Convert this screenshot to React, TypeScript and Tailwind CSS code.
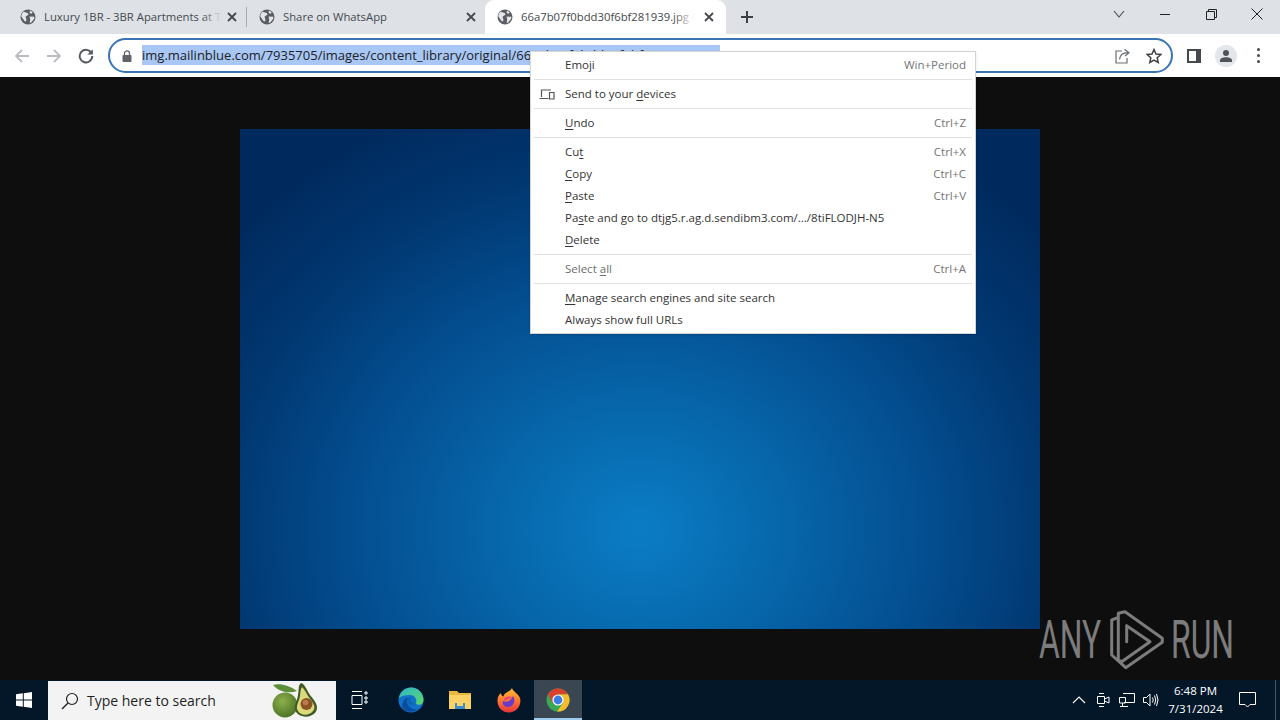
import React from "react";

const Globe = () => (
  <svg width="16" height="16" viewBox="0 0 16 16" className="shrink-0">
    <circle cx="8" cy="8" r="7.5" fill="#5a5e63" />
    <path d="M3.500 2.800C6 3.400 8 4 8.600 5.200 8 6.600 5.800 6.600 5.600 8 5.800 9.400 7 10 6 12.500L4.400 12C3.600 10 2.200 9 1.300 7.400 1.500 5.500 2.300 3.900 3.500 2.800ZM10 1.600 12.700 3.200 11.600 4.800 9.600 4ZM9.600 7.600 14.300 7.800 14.200 9.800 11.200 13.500 9.700 13.900 10.200 10.500Z" fill="#e4e6ea" />
  </svg>
);

const TabClose = () => (
  <svg width="10" height="10" viewBox="0 0 10 10" className="shrink-0">
    <path d="M1 1 9 9M9 1 1 9" stroke="#45494e" strokeWidth="1.800" />
  </svg>
);

const Tab = ({ title, active }: { title: string; active?: boolean }) => (
  <div
    className={
      "flex h-[34px] shrink-0 items-center pl-[12px] " +
      (active ? "w-[241px] rounded-t-[9px] bg-white pr-[7px]" : "w-[238px] pr-[4px]")
    }
  >
    <Globe />
    <div className={"relative ml-[8px] flex-1 overflow-hidden whitespace-nowrap text-[11.3px] leading-[34px] text-[#45494e] " + (active ? "mr-[5px]" : "")}>
      {title}
      <div
        className={
          "absolute right-0 top-0 h-[34px] w-[20px] bg-gradient-to-r from-transparent " +
          (active ? "to-white" : "to-[#dee1e6]")
        }
      />
    </div>
    <div className="flex w-[20px] shrink-0 justify-center">
      <TabClose />
    </div>
  </div>
);

const Nav = ({ children }: { children: React.ReactNode }) => (
  <div className="flex h-[32px] w-[32px] shrink-0 items-center justify-center">{children}</div>
);

const Mn = ({ children }: { children: React.ReactNode }) => <u className="underline underline-offset-2">{children}</u>;

const Row = ({ children, right, muted, icon }: { children: React.ReactNode; right?: string; muted?: boolean; icon?: boolean }) => (
  <div className={"relative flex h-[22px] items-center pl-[34px] pr-[9px] " + (muted ? "text-[#6d6d6d]" : "text-[#333333]")}>
    {icon && (
      <svg width="16" height="11" viewBox="0 0 16 11" className="absolute left-[8px] top-[6px]">
        <path d="M2.500 8V1H12M10.500 3.500H15V10H10.500ZM.5 9.500H9.500" fill="none" stroke="#555" strokeWidth="1.200" />
      </svg>
    )}
    <span className="flex-1 whitespace-nowrap">{children}</span>
    {right && <span className="whitespace-nowrap text-[#757575]">{right}</span>}
  </div>
);

const Sep = () => (
  <div className="flex h-[7px] items-center px-[3px]">
    <div className="h-px w-full bg-[#dfdfdf]" />
  </div>
);

const Menu = () => (
  <div className="absolute left-[530px] top-[51px] z-10 w-[446px] border border-[#d4d4d4] bg-white py-[2px] font-['Open_Sans','Noto_Sans',sans-serif] text-[11.5px] shadow-sm">
    <Row right="Win+Period">Emoji</Row>
    <Sep />
    <Row icon>Send to your <Mn>d</Mn>evices</Row>
    <Sep />
    <Row right="Ctrl+Z"><Mn>U</Mn>ndo</Row>
    <Sep />
    <Row right="Ctrl+X">Cu<Mn>t</Mn></Row>
    <Row right="Ctrl+C"><Mn>C</Mn>opy</Row>
    <Row right="Ctrl+V"><Mn>P</Mn>aste</Row>
    <Row>Pa<Mn>s</Mn>te and go to dtjg5.r.ag.d.sendibm3.com/.../8tiFLODJH-N5</Row>
    <Row><Mn>D</Mn>elete</Row>
    <Sep />
    <Row muted right="Ctrl+A">Select <Mn>a</Mn>ll</Row>
    <Sep />
    <Row><Mn>M</Mn>anage search engines and site search</Row>
    <Row>Always show full URLs</Row>
  </div>
);

const Avocado = () => (
  <svg width="60" height="40" viewBox="0 0 60 40" className="absolute left-[217px] top-[-1px]">
    <defs>
      <radialGradient id="lime" cx="0.4" cy="0.35" r="0.7">
        <stop offset="0" stopColor="#8cb04a" />
        <stop offset="1" stopColor="#4a7026" />
      </radialGradient>
    </defs>
    <path d="M8 5C14 3 24 5 32 11 24 14 14 12 8 5Z" fill="#5d8f3a" />
    <ellipse cx="20" cy="25" rx="12.500" ry="12.500" fill="url(#lime)" />
    <path d="M36 3C40 4 41 9 45 15 50 21 55 27 50 33 45 38 35 38 31 32 28 27 32 22 33 15 34 10 33 5 36 3Z" fill="#3f5a24" />
    <path d="M37 7C39 9 41 12 43 16 47 21 52 27 48 31 44 36 36 36 33 31 30 27 34 22 35 16 35.500 12 35.500 9 37 7Z" fill="#dcd97c" />
    <circle cx="41.500" cy="24" r="6" fill="#8c5226" />
    <circle cx="40.500" cy="22.500" r="2.800" fill="#b97c48" />
  </svg>
);

const Edge = () => (
  <svg width="26" height="26" viewBox="0 0 26 26">
    <defs>
      <linearGradient id="eg" x1="0" y1="0" x2="1" y2="1">
        <stop offset="0" stopColor="#2fb7c9" />
        <stop offset="1" stopColor="#5bd76a" />
      </linearGradient>
    </defs>
    <circle cx="13" cy="13" r="12.500" fill="#1272c9" />
    <path d="M1 11C2 4 8 .5 13 .5 20 .5 25.500 6 25.500 13 25.500 18 20 18.500 17.500 17 20 13 17 8 12 8 7 8 3 9 1 11Z" fill="url(#eg)" />
    <path d="M9 14C9 19 14 23 19 22.500 16 25.500 9 26 5 21 3 18 5 13 9 10 9.500 12 9 13 9 14Z" fill="#0b4ea0" />
    <path d="M9 14C9.500 11 12 9.500 14 9.500 12.500 11 12 12 13 14 14 16 18 17.500 20 17 17 18 10 19 9 14Z" fill="#0f65b3" />
  </svg>
);

const Folder = () => (
  <svg width="24" height="22" viewBox="0 0 24 22">
    <path d="M1 2H9L11 4H23V20H1Z" fill="#e8b73f" />
    <path d="M1 6H23V20H1Z" fill="#fad165" />
    <path d="M7 14H17V20H7Z" fill="#3a8ed0" />
    <path d="M9 14H15V17H9Z" fill="#fad165" />
  </svg>
);

const Firefox = () => (
  <svg width="24" height="26" viewBox="0 0 24 26">
    <defs>
      <linearGradient id="ff" x1="0.5" y1="0" x2="0.5" y2="1">
        <stop offset="0" stopColor="#ffc531" />
        <stop offset=".5" stopColor="#ff7a2e" />
        <stop offset="1" stopColor="#e8333e" />
      </linearGradient>
    </defs>
    <path d="M15 .5C15 4 21 6 23 11 25 19 19 25.500 12 25.500 5 25.500 0 20 .5 13 .7 9 2.500 7 4 6 4 8 5 9 6.500 9.500 7 6 11 5 13 3.500 14 2.500 15 1.500 15 .5Z" fill="url(#ff)" />
    <path d="M16 9C19 13 17 20 11 20 7 20 5 17 6 14 8 15 10 15 12 14 14 13 15 11 16 9Z" fill="#6a3bc8" />
    <path d="M7 12C9 9 13 9 16 11 13 11.500 10 12 8 14Z" fill="#e8487a" />
  </svg>
);

const Chrome = () => (
  <svg width="24" height="24" viewBox="0 0 24 24">
    <circle cx="12" cy="12" r="11.500" fill="#3aa757" />
    <path d="M12 .5A11.500 11.500 0 0 1 22 6.300L12 6.500 6.800 15.500 2 6.200A11.500 11.500 0 0 1 12 .5Z" fill="#d9412f" />
    <path d="M22 6.300A11.500 11.500 0 0 1 11 23.500L17 15 12 6.500Z" fill="#f5bd2c" />
    <circle cx="12" cy="12" r="5.600" fill="#fff" />
    <circle cx="12" cy="12" r="4.400" fill="#3b7ee6" />
  </svg>
);

const Task = ({ children, active }: { children: React.ReactNode; active?: boolean }) => (
  <div className={"relative flex h-[40px] w-[48px] shrink-0 items-center justify-center " + (active ? "bg-[#3a4753]" : "")}>
    {children}
    {active && <div className="absolute bottom-0 left-0 h-[2px] w-full bg-[#9fcbef]" />}
  </div>
);

const Watermark = "w-[62px] origin-left scale-x-[0.59] whitespace-nowrap font-['Roboto',sans-serif] text-[54px] font-normal leading-none";

export default function App() {
  return (
    <div className="relative flex h-[720px] w-[1280px] flex-col overflow-hidden bg-[#0e0e0e] font-['Open_Sans','Noto_Sans',sans-serif]">
      {/* tab strip */}
      <div className="flex h-[34px] shrink-0 items-center bg-[#dee1e6] pl-[8px]">
        <Tab title="Luxury 1BR - 3BR Apartments at The Residences" />
        <div className="h-[20px] w-px shrink-0 bg-[#a9abae]" />
        <Tab title="Share on WhatsApp" />
        <Tab title="66a7b07f0bdd30f6bf281939.jpg (800×500)" active />
        <svg width="14" height="14" viewBox="0 0 14 14" className="ml-[14px] shrink-0">
          <path d="M7 1V13M1 7H13" stroke="#3c4043" strokeWidth="2" />
        </svg>
        <div className="flex-1" />
        <div className="flex w-[184px] items-center">
          <div className="flex w-[46px] justify-center pb-[6px]">
            <svg width="12" height="8" viewBox="0 0 12 8"><path d="M1 1 6 7 11 1" fill="none" stroke="#45494e" strokeWidth="1.100" /></svg>
          </div>
          <div className="flex w-[46px] justify-center pb-[6px]"><div className="h-px w-[10px] bg-[#222]" /></div>
          <div className="flex w-[46px] justify-center pb-[6px]">
            <svg width="11" height="11" viewBox="0 0 11 11"><path d="M.5 2.500H8.500V10.500H.5ZM2.500 2.500V.5H10.500V8.500H8.500" fill="none" stroke="#222" /></svg>
          </div>
          <div className="flex w-[46px] justify-center pb-[6px]">
            <svg width="12" height="12" viewBox="0 0 12 12"><path d="M.5.5 11.500 11.500M11.500.5.5 11.500" stroke="#222" strokeWidth="1" /></svg>
          </div>
        </div>
      </div>

      {/* toolbar */}
      <div className="flex h-[43px] shrink-0 items-center bg-white pl-[6px]">
        <Nav>
          <svg width="16" height="16" viewBox="0 0 16 16"><path d="M15 8H2M8 2 2 8 8 14" fill="none" stroke="#b9bcc0" strokeWidth="1.800" /></svg>
        </Nav>
        <Nav>
          <svg width="16" height="16" viewBox="0 0 16 16"><path d="M1 8H14M8 2 14 8 8 14" fill="none" stroke="#b9bcc0" strokeWidth="1.800" /></svg>
        </Nav>
        <Nav>
          <svg width="16" height="16" viewBox="0 0 16 16"><path d="M13.600 5.200A6.300 6.300 0 1 0 14.300 8" fill="none" stroke="#55595e" strokeWidth="1.900" /><path d="M14.800 1.200V6.600H9.400Z" fill="#55595e" /></svg>
        </Nav>
        <div className="ml-[6px] flex h-[35px] w-[1065px] shrink-0 items-center rounded-full border-2 border-[#3a74b4] bg-white pl-[12px]">
          <svg width="10" height="12" viewBox="0 0 10 12" className="shrink-0"><path d="M2.500 5V3.400a2.500 2.500 0 0 1 5 0V5" fill="none" stroke="#5f6368" strokeWidth="1.300" /><rect x=".5" y="5" width="9" height="7" rx="1" fill="#5f6368" /></svg>
          <div className="mb-[2px] ml-[10px] flex-1 overflow-hidden whitespace-nowrap text-[13px] leading-[20px] text-[#202124]">
            <span className="inline-block w-[578px] overflow-hidden bg-[#a8c7f4] align-top">img.mailinblue.com/7935705/images/content_library/original/66a7b07f0bdd30f6bf281939.jpg</span>
          </div>
          <svg width="16" height="16" viewBox="0 0 16 16" className="mr-[16px] shrink-0"><path d="M8 3H2V15H13V10M5.500 11.500C6 7 9 4.700 14 4.700M10.500 1.200 15 4.700 11 8" fill="none" stroke="#6a6e72" strokeWidth="1.200" /></svg>
          <svg width="16" height="16" viewBox="0 0 16 16" className="mr-[9px] shrink-0"><path d="M8 1.500 10 6 14.800 6.500 11.200 9.700 12.200 14.500 8 12 3.800 14.500 4.800 9.700 1.200 6.500 6 6Z" fill="none" stroke="#3f4347" strokeWidth="1.500" /></svg>
        </div>
        <div className="ml-[5px] flex h-[32px] w-[32px] shrink-0 items-center justify-center">
          <svg width="14" height="14" viewBox="0 0 14 14"><rect x="1" y="1" width="12" height="12" fill="none" stroke="#45494e" strokeWidth="2" /><rect x="9" y="1" width="4" height="12" fill="#45494e" /></svg>
        </div>
        <div className="flex h-[32px] w-[32px] shrink-0 items-center justify-center">
          <div className="flex h-[22px] w-[22px] items-center justify-center rounded-full bg-[#e3e6ea]">
            <svg width="14" height="14" viewBox="0 0 14 14"><circle cx="7" cy="4" r="3" fill="#4f5358" /><path d="M1 13V11.500C1 9.500 4 8.300 7 8.300S13 9.500 13 11.500V13Z" fill="#4f5358" /></svg>
          </div>
        </div>
        <div className="flex h-[32px] w-[32px] shrink-0 flex-col items-center justify-center gap-[3px]">
          <div className="h-[3px] w-[3px] rounded-full bg-[#45494e]" />
          <div className="h-[3px] w-[3px] rounded-full bg-[#45494e]" />
          <div className="h-[3px] w-[3px] rounded-full bg-[#45494e]" />
        </div>
      </div>

      {/* page */}
      <div className="flex min-h-0 flex-1 items-center justify-center bg-[#0e0e0e]">
        <div className="h-[500px] w-[800px] bg-[radial-gradient(ellipse_530px_460px_at_50%_80%,#0b7dc6_0%,#0768ac_25%,#034d8f_55%,#01366f_80%,#002a5e_100%)]" />
      </div>

      {/* taskbar */}
      <div className="flex h-[40px] shrink-0 items-center bg-[#031729] text-white">
        <div className="flex h-[40px] w-[48px] shrink-0 items-center justify-center">
          <svg width="16" height="16" viewBox="0 0 16 16"><path d="M0 2.300 6.800 1.300V7.500H0ZM7.800 1.200 16 0V7.500H7.800ZM0 8.500H6.800V14.700L0 13.700ZM7.800 8.500H16V16L7.800 14.800Z" fill="#fff" /></svg>
        </div>
        <div className="relative flex h-[39px] w-[288px] shrink-0 items-center self-end bg-[#f3f3f3] pl-[12px] text-[#1f1f1f]">
          <svg width="20" height="20" viewBox="0 0 20 20"><circle cx="12" cy="8" r="5.500" fill="none" stroke="#222" strokeWidth="1.200" /><path d="M8 12 2 18" stroke="#222" strokeWidth="1.400" /></svg>
          <span className="ml-[7px] whitespace-nowrap text-[14px]">Type here to search</span>
          <Avocado />
        </div>
        <Task>
          <svg width="18" height="18" viewBox="0 0 18 18" className="mr-[2px]"><path d="M2 .5H12M2 17.500H12M2 4.500H12V13.500H2ZM15 1H17V3H15ZM15 6H17V8H15ZM15 10H17V12H15Z" fill="none" stroke="#fff" strokeWidth="1" /></svg>
        </Task>
        <div className="ml-[2px] flex w-[49px] justify-center"><Edge /></div>
        <div className="flex w-[49px] justify-center"><Folder /></div>
        <div className="flex w-[49px] justify-center"><Firefox /></div>
        <div className="ml-[1px]"><Task active><Chrome /></Task></div>
        <div className="flex-1" />
        <div className="flex h-[40px] items-center">
          <div className="flex w-[24px] justify-center"><svg width="14" height="8" viewBox="0 0 14 8"><path d="M1 7 7 1 13 7" fill="none" stroke="#fff" strokeWidth="1.100" /></svg></div>
          <div className="flex w-[24px] justify-center"><svg width="14" height="16" viewBox="0 0 14 16"><path d="M3 1.500H8M3 14.500H8M1.500 4.500H8.500V11.500H1.500ZM8.500 7 13 5V11L8.500 9" fill="none" stroke="#fff" strokeWidth="1" /></svg></div>
          <div className="flex w-[24px] justify-center"><svg width="16" height="14" viewBox="0 0 16 14"><path d="M4 .5H15.500V9.500H5M.5 4.500H6.500V10H.5ZM3.500 10V13.500M1 13.500H9" fill="none" stroke="#fff" strokeWidth="1" /></svg></div>
          <div className="flex w-[24px] justify-center"><svg width="16" height="14" viewBox="0 0 16 14"><path d="M.5 4.500H3.500L7 1V13L3.500 9.500H.5ZM9.500 4.500Q11 7 9.500 9.500M11.500 2.500Q14 7 11.500 11.500M13.500 1Q16.500 7 13.500 13" fill="none" stroke="#fff" strokeWidth="1" /></svg></div>
        </div>
        <div className="flex w-[65px] flex-col items-center text-[11.5px] leading-[18px] text-white">
          <span>6:48 PM</span>
          <span>7/31/2024</span>
        </div>
        <div className="ml-[3px] flex w-[32px] justify-center">
          <svg width="17" height="16" viewBox="0 0 17 16"><path d="M.5 .5H16.500V12.500H11L8.500 15 6 12.500H.5Z" fill="none" stroke="#fff" strokeWidth="1" /></svg>
        </div>
        <div className="ml-[12px] h-[40px] w-px bg-[#4a5663]" />
        <div className="w-[4px]" />
      </div>

      <Menu />

      {/* watermark */}
      <div className="pointer-events-none absolute left-[1039px] top-[605px] flex h-[70px] items-center text-[#7c7c7c]">
        <span className={Watermark}>ANY</span>
        <svg width="65" height="70" viewBox="0 0 65 70" className="ml-[4px] shrink-0">
          <path d="M12.700 12.700 6.700 15V50L20.700 62.700 57.300 37.300V33.300L20 6.700 13.300 8.300V55L16.700 56.700 45 36.700 21.700 20.700V36.700" fill="none" stroke="#7c7c7c" strokeWidth="3" strokeLinejoin="round" strokeLinecap="round" />
        </svg>
        <span className={"ml-[1px] " + Watermark}>RUN</span>
      </div>
    </div>
  );
}
